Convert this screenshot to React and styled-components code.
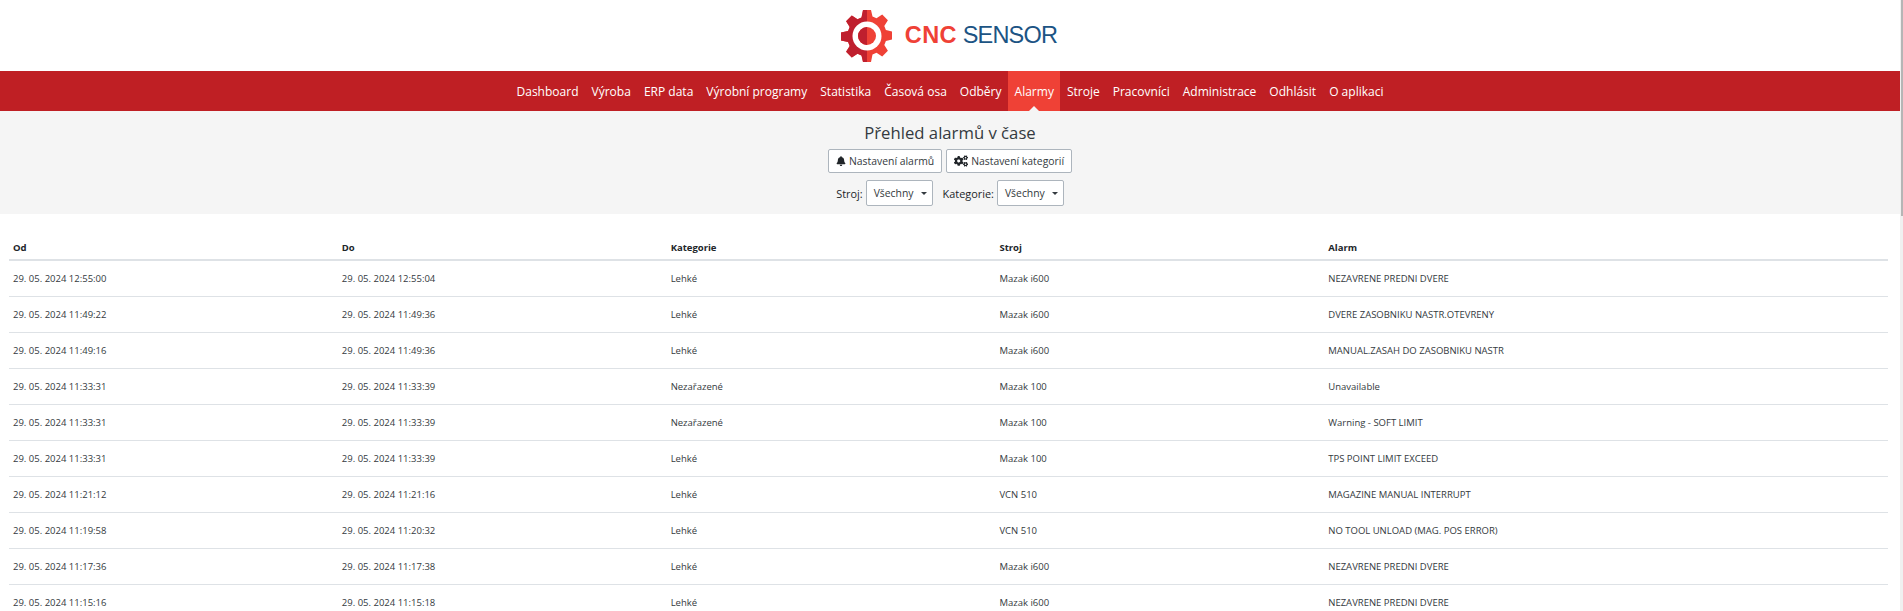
import { createGlobalStyle, styled } from "styled-components";
import { FaBell, FaCogs } from "react-icons/fa";

const GlobalStyle = createGlobalStyle`
  html, body {
    margin: 0;
    height: 611px;
    overflow: hidden;
    background: #fff;
  }
  body {
    font-family: "Open Sans", "Noto Sans", "Liberation Sans", sans-serif;
    color: #212529;
  }
`;

const navItems = [
  "Dashboard",
  "Výroba",
  "ERP data",
  "Výrobní programy",
  "Statistika",
  "Časová osa",
  "Odběry",
  "Alarmy",
  "Stroje",
  "Pracovníci",
  "Administrace",
  "Odhlásit",
  "O aplikaci",
];

const rows = [
  ["29. 05. 2024 12:55:00", "29. 05. 2024 12:55:04", "Lehké", "Mazak i600", "NEZAVRENE PREDNI DVERE"],
  ["29. 05. 2024 11:49:22", "29. 05. 2024 11:49:36", "Lehké", "Mazak i600", "DVERE ZASOBNIKU NASTR.OTEVRENY"],
  ["29. 05. 2024 11:49:16", "29. 05. 2024 11:49:36", "Lehké", "Mazak i600", "MANUAL.ZASAH DO ZASOBNIKU NASTR"],
  ["29. 05. 2024 11:33:31", "29. 05. 2024 11:33:39", "Nezařazené", "Mazak 100", "Unavailable"],
  ["29. 05. 2024 11:33:31", "29. 05. 2024 11:33:39", "Nezařazené", "Mazak 100", "Warning - SOFT LIMIT"],
  ["29. 05. 2024 11:33:31", "29. 05. 2024 11:33:39", "Lehké", "Mazak 100", "TPS POINT LIMIT EXCEED"],
  ["29. 05. 2024 11:21:12", "29. 05. 2024 11:21:16", "Lehké", "VCN 510", "MAGAZINE MANUAL INTERRUPT"],
  ["29. 05. 2024 11:19:58", "29. 05. 2024 11:20:32", "Lehké", "VCN 510", "NO TOOL UNLOAD (MAG. POS ERROR)"],
  ["29. 05. 2024 11:17:36", "29. 05. 2024 11:17:38", "Lehké", "Mazak i600", "NEZAVRENE PREDNI DVERE"],
  ["29. 05. 2024 11:15:16", "29. 05. 2024 11:15:18", "Lehké", "Mazak i600", "NEZAVRENE PREDNI DVERE"],
];

const Logo = () => (
  <LogoBox>
    <svg width="52" height="52" viewBox="0 0 52 52">
      <defs>
        <clipPath id="gear-left">
          <rect x="0" y="0" width="26" height="52" />
        </clipPath>
        <path
          id="gear"
          d="M22 0h8l1.500 6.600 4 1.600 5.700-3.600 5.700 5.700-3.600 5.700 1.600 4 6.100 1.500v8l-6.100 1.500-1.600 4 3.600 5.700-5.700 5.700-5.700-3.600-4 1.600L30 52h-8l-1.500-6.600-4-1.600-5.700 3.600-5.700-5.700 3.600-5.700-1.600-4L0 30.500v-8l7.100-1.500 1.600-4L5.100 11.300l5.700-5.700 5.700 3.600 4-1.600z"
        />
      </defs>
      <use href="#gear" fill="#ef4136" />
      <use href="#gear" fill="#bf1f2e" clipPath="url(#gear-left)" />
      <circle cx="26" cy="26" r="14.500" fill="#fff" />
      <circle cx="26" cy="26" r="9" fill="#ef4136" />
      <path d="M26 17a9 9 0 0 0 0 18z" fill="#bf1f2e" />
    </svg>
    <LogoText>
      <strong>CNC</strong> SENSOR
    </LogoText>
  </LogoBox>
);

const App = () => {
  return (
    <>
      <GlobalStyle />
      <Page>
        <Header>
          <Logo />
        </Header>
        <Nav>
          {navItems.map((item) => (
            <NavItem key={item} $active={item === "Alarmy"}>
              {item}
            </NavItem>
          ))}
        </Nav>
        <Panel>
          <Title>Přehled alarmů v čase</Title>
          <ButtonRow>
            <Button>
              <FaBell size={10} /> Nastavení alarmů
            </Button>
            <Button>
              <FaCogs size={14} /> Nastavení kategorií
            </Button>
          </ButtonRow>
          <FilterRow>
            <Filter>
              Stroj:
              <SelectButton>
                Všechny <Caret />
              </SelectButton>
            </Filter>
            <Filter>
              Kategorie:
              <SelectButton>
                Všechny <Caret />
              </SelectButton>
            </Filter>
          </FilterRow>
        </Panel>
        <TableWrap>
          <Table>
            <thead>
              <tr>
                <Th>Od</Th>
                <Th>Do</Th>
                <Th>Kategorie</Th>
                <Th>Stroj</Th>
                <Th $last>Alarm</Th>
              </tr>
            </thead>
            <tbody>
              {rows.map((row, i) => (
                <tr key={i}>
                  {row.map((cell, j) => (
                    <Td key={j}>{cell}</Td>
                  ))}
                </tr>
              ))}
            </tbody>
          </Table>
        </TableWrap>
      </Page>
      <ScrollTrack>
        <ScrollThumb />
      </ScrollTrack>
    </>
  );
};

const Page = styled.div`
  width: 1900px;
`;

const ScrollTrack = styled.div`
  position: fixed;
  top: 0;
  right: 0;
  bottom: 0;
  width: 3px;
  background: #f0f0f0;
`;

const ScrollThumb = styled.div`
  width: 2px;
  height: 216px;
  margin-left: 1px;
  background: #b5b5b5;
`;

const Header = styled.header`
  height: 71px;
  display: flex;
  align-items: center;
  justify-content: center;
`;

const LogoBox = styled.div`
  display: flex;
  align-items: center;
  gap: 12px;
  margin-left: -2px;
`;

const LogoText = styled.div`
  font-family: "Liberation Sans", Arial, sans-serif;
  font-size: 23.500px;
  letter-spacing: -0.8px;
  color: #1c5484;
  strong {
    color: #ef4136;
    font-weight: 700;
    letter-spacing: 0.400px;
  }
`;

const Nav = styled.nav`
  height: 40px;
  background: #bf1f24;
  display: flex;
  justify-content: center;
`;

const NavItem = styled.a`
  position: relative;
  padding: 0 6.500px;
  font-size: 12.030px;
  line-height: 41px;
  color: #fff;
  background: ${(p) => (p.$active ? "#ef4136" : "transparent")};
  &::after {
    content: "";
    display: ${(p) => (p.$active ? "block" : "none")};
    position: absolute;
    left: 50%;
    bottom: 0;
    margin-left: -5px;
    border: 5px solid transparent;
    border-top: 0;
    border-bottom-color: #f5f5f5;
  }
`;

const Panel = styled.section`
  height: 103px;
  background: #f5f5f5;
  display: flex;
  flex-direction: column;
  align-items: center;
`;

const Title = styled.h1`
  margin: 11px 0 5px;
  font-size: 16.700px;
  font-weight: 400;
  line-height: 22px;
  color: #343a40;
`;

const ButtonRow = styled.div`
  display: flex;
  gap: 4px;
`;

const FilterRow = styled.div`
  display: flex;
  gap: 10px;
  margin-top: 7px;
`;

const Filter = styled.label`
  display: flex;
  align-items: center;
  gap: 3px;
  font-size: 10.900px;
  color: #212529;
`;

const Button = styled.button`
  display: inline-flex;
  align-items: center;
  gap: 3px;
  height: 24px;
  padding: 0 7px;
  font-family: inherit;
  font-size: 10.400px;
  color: #343a40;
  background: #fff;
  border: 1px solid #adb5bd;
  border-radius: 2px;
  svg {
    color: #212529;
  }
`;

const SelectButton = styled(Button)`
  height: 26px;
  padding: 0 5px 0 7px;
`;

const Caret = styled.span`
  margin-left: 4px;
  border-top: 3.500px solid #343a40;
  border-left: 3.500px solid transparent;
  border-right: 3.500px solid transparent;
`;

const TableWrap = styled.div`
  padding: 21px 12px 0 9px;
`;

const Table = styled.table`
  width: 100%;
  border-collapse: collapse;
  table-layout: fixed;
  font-size: 9.500px;
`;

const Th = styled.th`
  box-sizing: border-box;
  width: ${(p) => (p.$last ? "auto" : "17.5%")};
  height: 25px;
  padding: 0 4px;
  text-align: left;
  font-weight: 700;
  color: #212529;
  border-bottom: 2px solid #dee2e6;
`;

const Td = styled.td`
  height: 35px;
  padding: 0 4px;
  color: #343a40;
  border-bottom: 1px solid #dee2e6;
`;

export default App;
